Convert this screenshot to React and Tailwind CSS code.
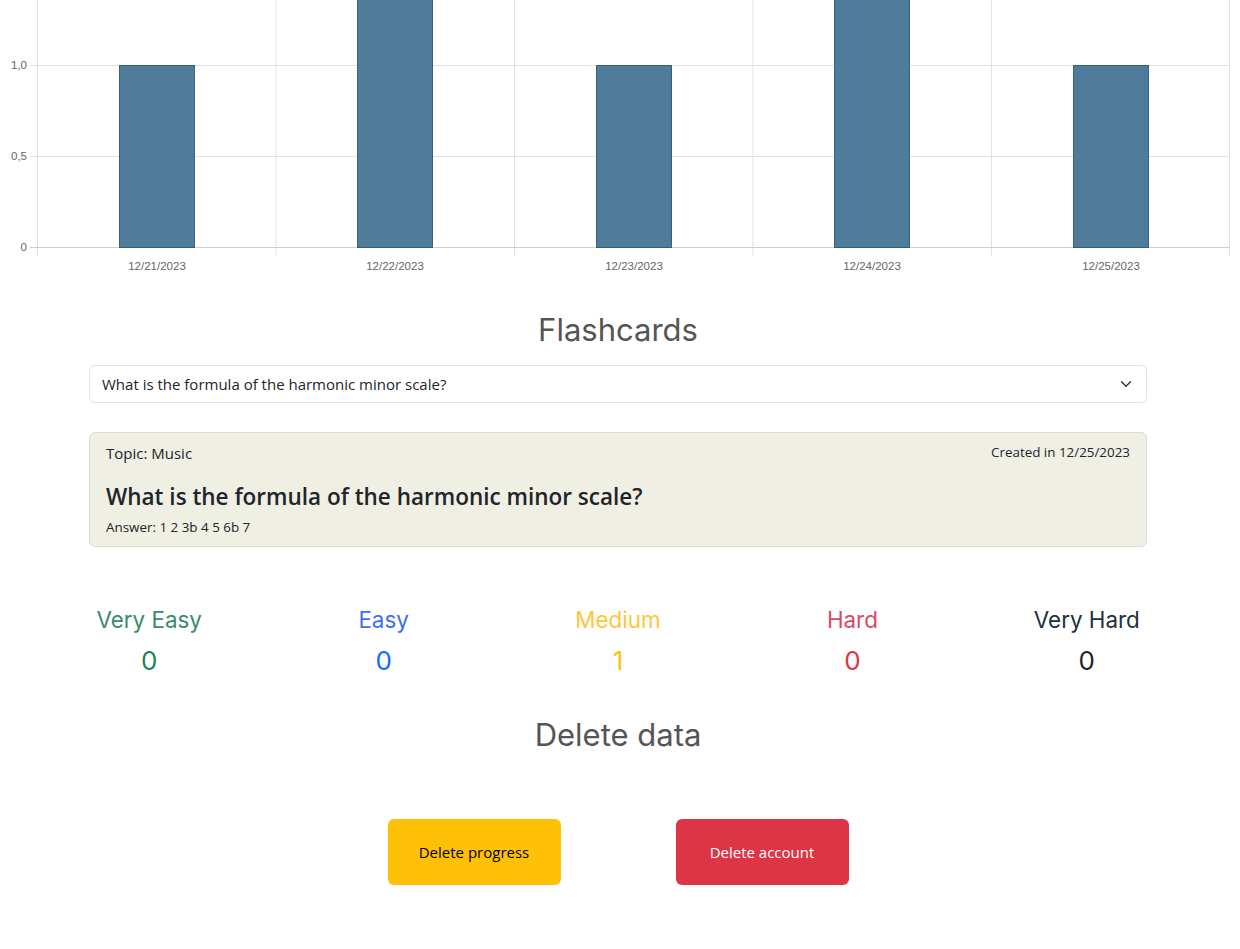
import React from "react";

const bars = [
  { label: "12/21/2023", x: 119, value: 1 },
  { label: "12/22/2023", x: 357, value: 2 },
  { label: "12/23/2023", x: 596, value: 1 },
  { label: "12/24/2023", x: 834, value: 2 },
  { label: "12/25/2023", x: 1073, value: 1 },
];

const stats = [
  { name: "Very Easy", count: 0, label: "text-[#3a8a6e]", num: "text-[#198754]" },
  { name: "Easy", count: 0, label: "text-[#3d6ef5]", num: "text-[#0d6efd]" },
  { name: "Medium", count: 1, label: "text-[#ffc53d]", num: "text-[#ffc107]" },
  { name: "Hard", count: 0, label: "text-[#d84a67]", num: "text-[#dc3545]" },
  { name: "Very Hard", count: 0, label: "text-[#212f3f]", num: "text-[#212529]" },
];

const ZERO_Y = 247.5;
const UNIT = 182;

const ReviewChart = () => {
  const gridX = [37.5, 276, 514.5, 753, 991.5, 1229.5];
  return (
    <svg width="1240" height="284" className="block" style={{ fontFamily: "'Liberation Sans', Arial, sans-serif" }}>
      {gridX.map((x) => (
        <line key={x} x1={x} y1="0" x2={x} y2="256" stroke="#e2e2e2" strokeWidth="1" />
      ))}
      <line x1="30" y1="65.5" x2="1230" y2="65.5" stroke="#e2e2e2" />
      <line x1="30" y1="156.5" x2="1230" y2="156.5" stroke="#e2e2e2" />
      <line x1="30" y1={ZERO_Y} x2="1230" y2={ZERO_Y} stroke="#cfcfcf" />
      <text x="27" y="69" textAnchor="end" fontSize="11.5" fill="#666">1,0</text>
      <text x="27" y="160" textAnchor="end" fontSize="11.5" fill="#666">0,5</text>
      <text x="27" y="251" textAnchor="end" fontSize="11.5" fill="#666">0</text>
      {bars.map((b) => {
        const top = ZERO_Y - b.value * UNIT;
        return (
          <g key={b.label}>
            <rect x={b.x + 0.5} y={top} width="75" height={ZERO_Y - top} fill="#4e7c9a" stroke="#2f5770" strokeOpacity="0.9" strokeWidth="1" />
            <text x={b.x + 38} y="270" textAnchor="middle" fontSize="11.5" fill="#666">
              {b.label}
            </text>
          </g>
        );
      })}
    </svg>
  );
};

const App = () => {
  return (
    <div className="min-h-screen bg-white font-['Open_Sans','Noto_Sans',sans-serif] text-[#212529]">
      <ReviewChart />

      <div className="w-[1236px]">
        <h2 className="mt-[28px] text-center text-[31px] leading-[36px] text-[#555] font-['Inter',sans-serif] font-normal">
          Flashcards
        </h2>

        <div className="mx-auto mt-[17px] w-[1058px]">
          <div className="flex h-[38px] items-center justify-between rounded-[6px] border border-[#dee2e6] bg-white pl-[12px] pr-[14px] text-[15px]">
            <span>What is the formula of the harmonic minor scale?</span>
            <svg width="12" height="12" viewBox="0 0 16 16" fill="none" stroke="#343a40" strokeWidth="2" strokeLinecap="round" strokeLinejoin="round">
              <path d="M2 5l6 6 6-6" />
            </svg>
          </div>

          <div className="mt-[29px] h-[115px] rounded-[6px] border border-[#dcdcd4] bg-[#f0efe4] px-[16px] pt-[9px]">
            <div className="flex items-start justify-between">
              <span className="text-[15px] leading-[22px]">Topic: Music</span>
              <span className="text-[13.4px] leading-[20px]">Created in 12/25/2023</span>
            </div>
            <h3 className="mt-[19px] text-[22.5px] font-semibold leading-[28px]">
              What is the formula of the harmonic minor scale?
            </h3>
            <p className="mt-[7px] text-[13.4px] leading-[18px]">Answer: 1 2 3b 4 5 6b 7</p>
          </div>
        </div>

        <div className="mx-auto mt-[58px] grid w-[1172px] grid-cols-5 font-['Inter',sans-serif]">
          {stats.map((s) => (
            <div key={s.name} className="flex flex-col items-center">
              <span className={`text-[22.4px] leading-[30px] ${s.label}`}>{s.name}</span>
              <span className={`mt-[10px] text-[26px] leading-[32px] ${s.num}`}>{s.count}</span>
            </div>
          ))}
        </div>

        <h2 className="mt-[40px] text-center text-[31px] leading-[36px] text-[#555] font-['Inter',sans-serif] font-normal">
          Delete data
        </h2>

        <div className="mt-[66px] flex justify-center gap-[115px]">
          <button className="h-[66px] w-[173px] rounded-[6px] bg-[#ffc107] text-[15px] text-black">
            Delete progress
          </button>
          <button className="h-[66px] w-[173px] rounded-[6px] bg-[#dc3545] text-[15px] text-white">
            Delete account
          </button>
        </div>
      </div>
    </div>
  );
};

export default App;
